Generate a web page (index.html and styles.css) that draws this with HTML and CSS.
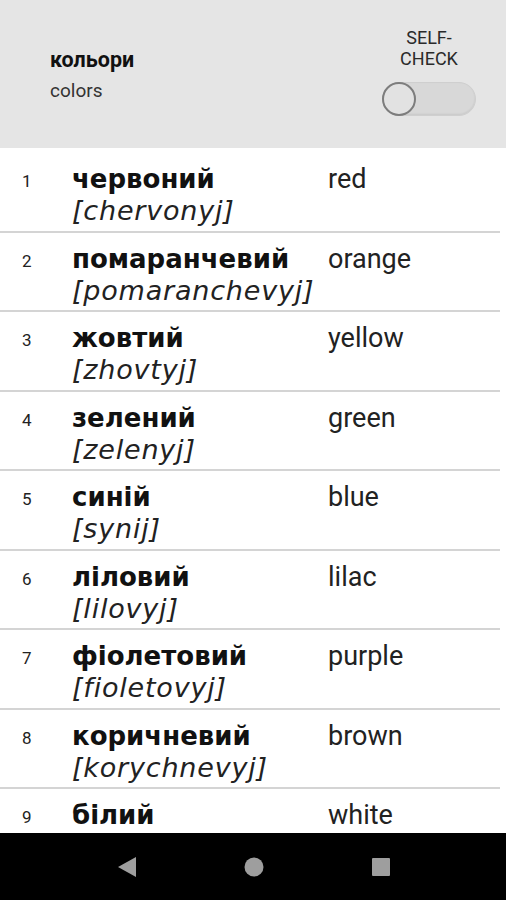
FILE: index.html
```html
<!DOCTYPE html>
<html lang="uk">
<head>
<meta charset="utf-8">
<title>кольори</title>
<link rel="stylesheet" href="styles.css">
</head>
<body>
<div class="screen">
  <header class="header">
    <div class="title">
      <div class="title-uk">кольори</div>
      <div class="title-en">colors</div>
    </div>
    <div class="check">
      <div class="check-label">SELF-<br>CHECK</div>
      <div class="switch"><span class="thumb"></span></div>
    </div>
  </header>
  <main class="list">
    <div class="row"><div class="num">1</div><div class="word"><div class="uk">червоний</div><div class="tr">[chervonyj]</div></div><div class="en">red</div></div>
    <div class="row"><div class="num">2</div><div class="word"><div class="uk">помаранчевий</div><div class="tr">[pomaranchevyj]</div></div><div class="en">orange</div></div>
    <div class="row"><div class="num">3</div><div class="word"><div class="uk">жовтий</div><div class="tr">[zhovtyj]</div></div><div class="en">yellow</div></div>
    <div class="row"><div class="num">4</div><div class="word"><div class="uk">зелений</div><div class="tr">[zelenyj]</div></div><div class="en">green</div></div>
    <div class="row"><div class="num">5</div><div class="word"><div class="uk">синій</div><div class="tr">[synij]</div></div><div class="en">blue</div></div>
    <div class="row"><div class="num">6</div><div class="word"><div class="uk">ліловий</div><div class="tr">[lilovyj]</div></div><div class="en">lilac</div></div>
    <div class="row"><div class="num">7</div><div class="word"><div class="uk">фіолетовий</div><div class="tr">[fioletovyj]</div></div><div class="en">purple</div></div>
    <div class="row"><div class="num">8</div><div class="word"><div class="uk">коричневий</div><div class="tr">[korychnevyj]</div></div><div class="en">brown</div></div>
    <div class="row"><div class="num">9</div><div class="word"><div class="uk">білий</div><div class="tr">[bilyj]</div></div><div class="en">white</div></div>
  </main>
  <nav class="navbar">
    <svg class="nav-icon" width="18" height="20" viewBox="0 0 18 20"><polygon points="18,0 18,20 0,10" fill="#9e9e9e"/></svg>
    <svg class="nav-icon" width="20" height="20" viewBox="0 0 20 20"><circle cx="10" cy="10" r="9.5" fill="#9e9e9e"/></svg>
    <svg class="nav-icon" width="18" height="18" viewBox="0 0 18 18"><rect x="0" y="0" width="18" height="18" rx="1" fill="#9e9e9e"/></svg>
  </nav>
</div>
</body>
</html>
```
FILE: styles.css
```css
* { box-sizing: border-box; }
html, body { margin: 0; padding: 0; }
body { background: #fff; font-family: Roboto, "Liberation Sans", sans-serif; color: #111; }
.screen { width: 506px; height: 900px; display: flex; flex-direction: column; overflow: hidden; }

.header { height: 148px; flex: none; background: #e5e5e5; display: flex; justify-content: space-between; align-items: center; padding: 0 30px 0 50px; }
.title { display: flex; flex-direction: column; gap: 7px; }
.title-uk { font-weight: 700; font-size: 21.5px; line-height: 25px; color: #111; }
.title-en { font-size: 19px; line-height: 23px; color: #333; }
.check { align-self: flex-start; margin-top: 27px; display: flex; flex-direction: column; align-items: center; gap: 13px; }
.check-label { font-size: 18px; line-height: 21px; text-align: center; color: #2a2a2a; }
.switch { position: relative; width: 94px; height: 34px; border-radius: 17px; background: #d8d8d8; border: 1px solid #cfcfcf; box-shadow: inset 0 -1px 2px rgba(0,0,0,0.08); }
.thumb { position: absolute; left: -1px; top: -1px; width: 34px; height: 34px; border-radius: 50%; background: #e2e2e2; border: 2px solid #7d7d7d; }

.list { flex: 1; padding-top: 5px; margin-right: 6px; overflow: hidden; }
.row { height: 79.5px; border-bottom: 2px solid #d4d4d4; display: flex; align-items: flex-start; padding-top: 11px; }
.num { width: 72px; padding-left: 22px; font-size: 17px; line-height: 20px; color: #222; padding-top: 7px; }
.word { width: 256px; white-space: nowrap; }
.uk { font-family: "DejaVu Sans", sans-serif; font-weight: 700; font-size: 26px; line-height: 30px; color: #111; }
.tr { font-family: "DejaVu Sans", sans-serif; font-style: italic; font-size: 27px; letter-spacing: 0.8px; line-height: 34px; color: #222; }
.en { font-size: 27px; line-height: 30px; color: #222; }

.navbar { height: 67px; flex: none; background: #000; display: flex; align-items: center; }
.nav-icon { display: block; }
.navbar .nav-icon:nth-child(1) { margin-left: 118px; }
.navbar .nav-icon:nth-child(2) { margin-left: 108px; }
.navbar .nav-icon:nth-child(3) { margin-left: 108px; }
```
